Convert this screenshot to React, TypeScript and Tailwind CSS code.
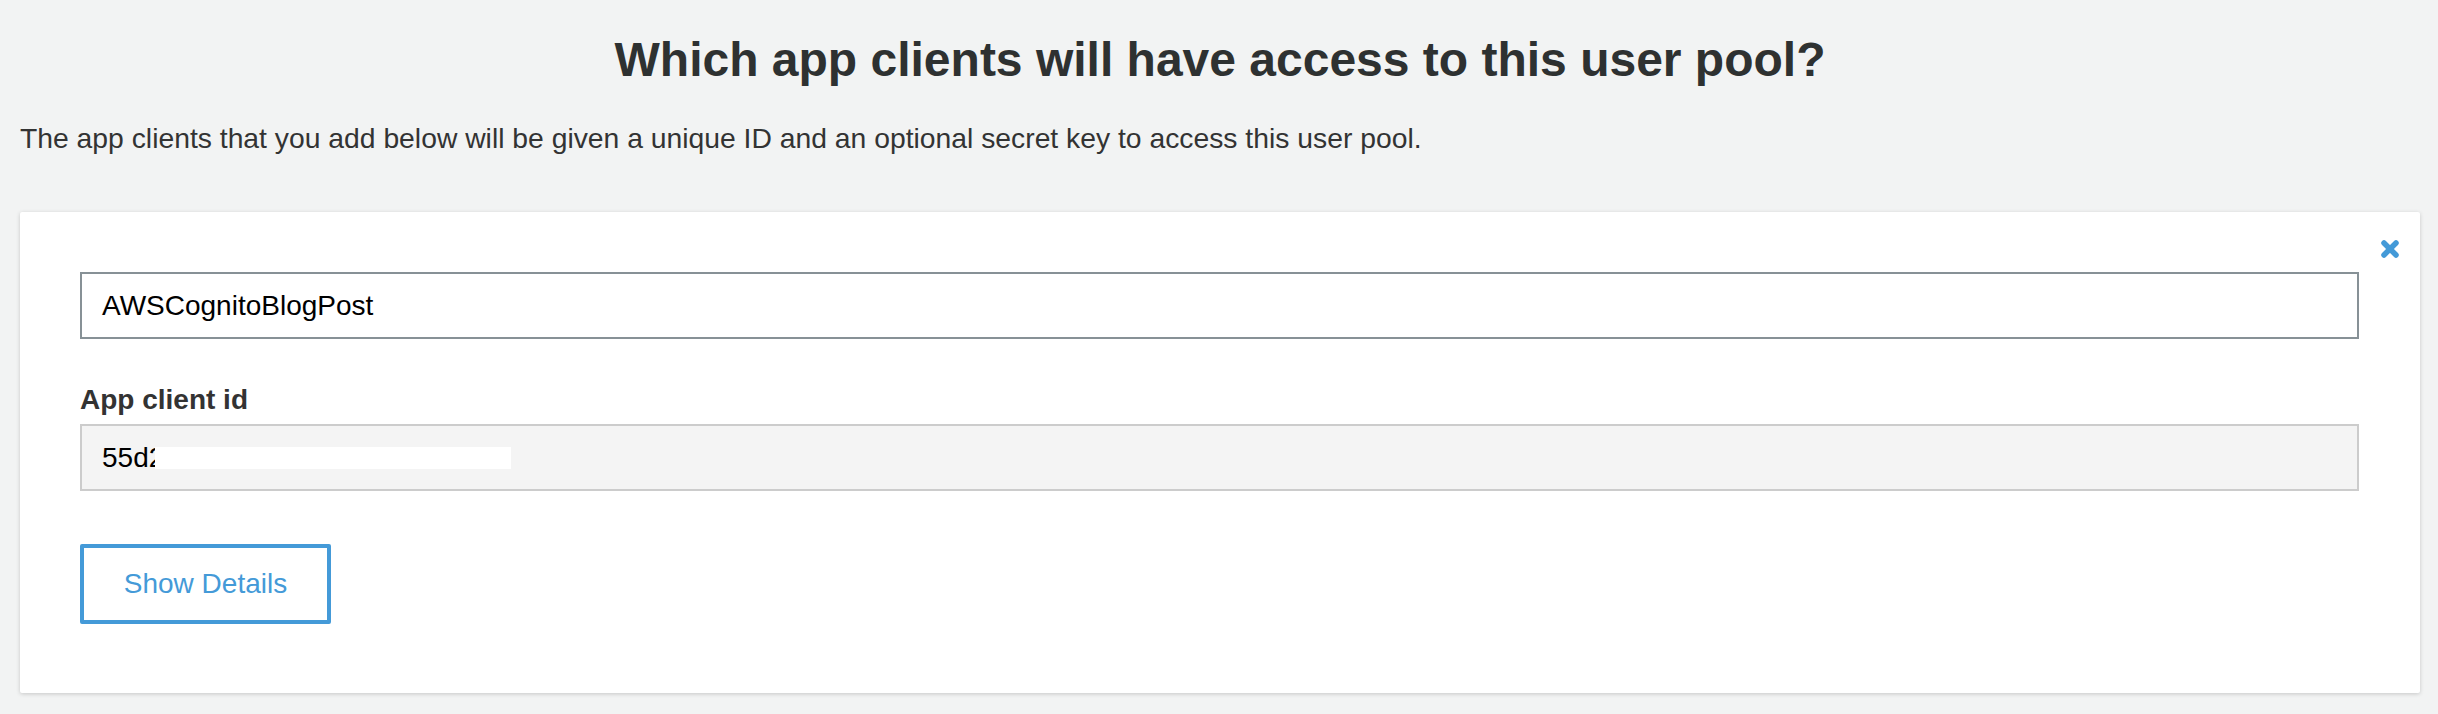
import React from "react";

const CloseIcon = () => (
  <svg width="20" height="20" viewBox="0 0 20 20" aria-hidden="true">
    <path
      d="M4 4 L16 16 M16 4 L4 16"
      stroke="#449ad8"
      strokeWidth="5.5"
      strokeLinecap="round"
      fill="none"
    />
  </svg>
);

const App = () => {
  return (
    <div
      className="min-h-[714px] w-full bg-[#f2f3f3] text-[#333333] pl-5 pr-[18px] pt-[32px] pb-5"
      style={{ fontFamily: '"Liberation Sans", Arial, sans-serif' }}
    >
      <h1 className="text-center font-bold text-[48px] leading-[56px] text-[#2e3131]">
        Which app clients will have access to this user pool?
      </h1>
      <p className="mt-[30px] text-[28.3px] leading-[40px] text-[#333333]">
        The app clients that you add below will be given a unique ID and an optional secret key to access this user pool.
      </p>

      <div className="relative mt-[54px] bg-white rounded-[2px] shadow-[0_1px_4px_rgba(0,0,0,0.18)] pl-[60px] pr-[61px] pt-[60px] pb-[69px]">
        <button className="absolute right-[20px] top-[27px] flex items-center justify-center">
          <CloseIcon />
        </button>

        <div className="flex items-center h-[67px] border-2 border-[#879196] bg-white px-[20px] text-[28px] text-black">
          AWSCognitoBlogPost
        </div>

        <div className="mt-[43px] font-bold text-[28px] leading-[36px] text-[#333333]">
          App client id
        </div>
        <div className="mt-[6px] flex items-center h-[67px] border-2 border-[#cccccc] bg-[#f4f4f4] px-[20px] text-[28px] text-black">
          <span>55d2</span>
          <span className="ml-[-9px] inline-block h-[22px] w-[356px] bg-white"></span>
        </div>

        <button className="mt-[53px] flex items-center justify-center w-[251px] h-[80px] border-4 border-[#449ad8] rounded-[2px] bg-white text-[28px] text-[#449ad8]">
          Show Details
        </button>
      </div>
    </div>
  );
};

export default App;
